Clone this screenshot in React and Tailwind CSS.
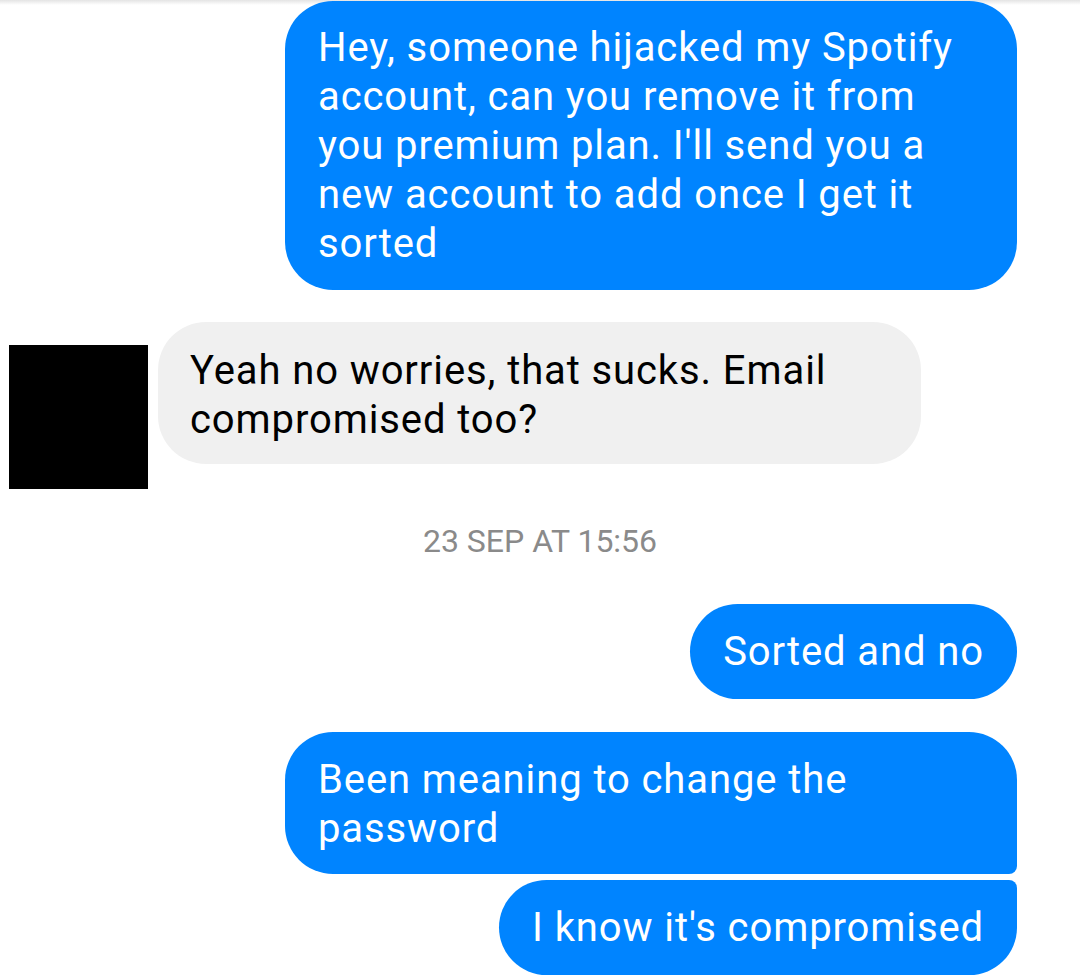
export default function App() {
  const font = { fontFamily: "Roboto, 'Noto Sans', sans-serif" };
  return (
    <div className="relative w-[1080px] h-[978px] bg-white overflow-hidden" style={font}>
      <div className="absolute top-0 left-0 right-0 h-[5px] bg-gradient-to-b from-[#e4e4e4] to-white" />
      <div className="relative flex flex-col">
        {/* Bubble 1 */}
        <div className="flex justify-end pr-[63px] mt-[1px]">
          <div className="w-[732px] bg-[#0084ff] text-white text-[40px] tracking-[0.9px] leading-[49px] pl-[33px] pr-[10px] pt-[22px] pb-[22px] rounded-[48px]">
            <div className="whitespace-nowrap">Hey, someone hijacked my Spotify</div>
            <div className="whitespace-nowrap">account, can you remove it from</div>
            <div className="whitespace-nowrap">you premium plan. I'll send you a</div>
            <div className="whitespace-nowrap">new account to add once I get it</div>
            <div className="whitespace-nowrap">sorted</div>
          </div>
        </div>

        {/* Incoming */}
        <div className="flex items-start mt-[32px] pl-[9px] gap-[10px]">
          <div className="w-[139px] h-[144px] bg-black mt-[23px]" />
          <div className="w-[763px] bg-[#f0f0f0] text-black text-[40px] tracking-[0.9px] leading-[49px] pl-[32px] pr-[10px] pt-[24px] pb-[20px] rounded-[48px]">
            <div className="whitespace-nowrap">Yeah no worries, that sucks. Email</div>
            <div className="whitespace-nowrap">compromised too?</div>
          </div>
        </div>

        {/* Timestamp */}
        <div className="mt-[32px] flex justify-center">
          <div className="text-[32px] leading-[40px] text-[#8a8a8a]">
            23 SEP AT 15:56
          </div>
        </div>

        {/* Sorted and no */}
        <div className="flex justify-end pr-[63px] mt-[43px]">
          <div className="bg-[#0084ff] text-white text-[40px] tracking-[0.9px] leading-[49px] pl-[33px] pr-[33px] pt-[23px] pb-[23px] rounded-full whitespace-nowrap">
            Sorted and no
          </div>
        </div>

        {/* Been meaning */}
        <div className="flex justify-end pr-[63px] mt-[33px]">
          <div className="w-[732px] bg-[#0084ff] text-white text-[40px] tracking-[0.9px] leading-[49px] pl-[33px] pr-[10px] pt-[23px] pb-[21px] rounded-tl-[48px] rounded-tr-[48px] rounded-bl-[48px] rounded-br-[8px]">
            <div className="whitespace-nowrap">Been meaning to change the</div>
            <div className="whitespace-nowrap">password</div>
          </div>
        </div>

        {/* I know */}
        <div className="flex justify-end pr-[63px] mt-[6px]">
          <div className="bg-[#0084ff] text-white text-[40px] tracking-[0.9px] leading-[49px] pl-[33px] pr-[33px] pt-[23px] pb-[23px] rounded-tl-[48px] rounded-tr-[8px] rounded-bl-[48px] rounded-br-[48px] whitespace-nowrap">
            I know it's compromised
          </div>
        </div>
      </div>
    </div>
  );
}
